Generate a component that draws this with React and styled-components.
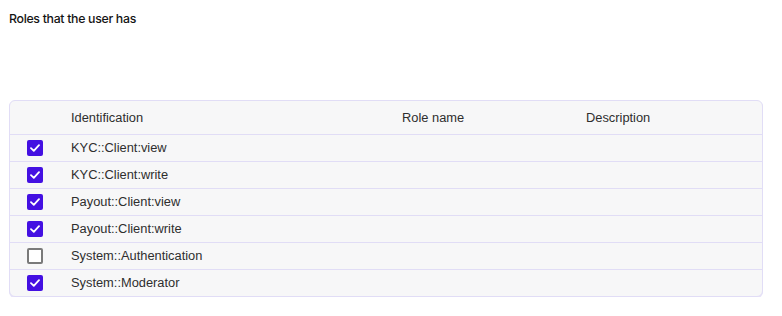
import styled, { createGlobalStyle } from 'styled-components';

const GlobalStyle = createGlobalStyle`
    body {
        margin: 0;
        background: #ffffff;
        font-family: "Liberation Sans", Arial, sans-serif;
    }
`;

const roles = [
    { id: 'KYC::Client:view', checked: true },
    { id: 'KYC::Client:write', checked: true },
    { id: 'Payout::Client:view', checked: true },
    { id: 'Payout::Client:write', checked: true },
    { id: 'System::Authentication', checked: false },
    { id: 'System::Moderator', checked: true },
];

function CheckMark() {
    return (
        <svg width="10" height="8" viewBox="0 0 10 8" fill="none">
            <path d="M1 4.2L3.8 6.8L9 1.2" stroke="#ffffff" strokeWidth="1.8" strokeLinecap="round" strokeLinejoin="round" />
        </svg>
    );
}

function App() {
    return (
        <Page>
            <GlobalStyle />
            <Title>Roles that the user has</Title>
            <Table>
                <HeaderRow>
                    <Cell />
                    <Cell>Identification</Cell>
                    <Cell>Role name</Cell>
                    <Cell>Description</Cell>
                </HeaderRow>
                {roles.map((role) => (
                    <Row key={role.id}>
                        <BoxCell>
                            <Box checked={role.checked}>
                                {role.checked && <CheckMark />}
                            </Box>
                        </BoxCell>
                        <RowCell>{role.id}</RowCell>
                        <RowCell />
                        <RowCell />
                    </Row>
                ))}
            </Table>
        </Page>
    );
}

const Page = styled.div`
    padding: 11px 19px 0 9px;
`;

const Title = styled.h2`
    margin: 0;
    font-family: Inter, "Liberation Sans", sans-serif;
    font-size: 12.3px;
    font-weight: 500;
    line-height: 16px;
    letter-spacing: -0.3px;
    color: #141414;
`;

const Table = styled.div`
    margin-top: 73px;
    border: 1px solid #e1ddf6;
    border-radius: 6px;
    background: #f7f7f8;
    overflow: hidden;
    box-shadow: 0 1px 0 #e6e2f8;
`;

const HeaderRow = styled.div`
    display: grid;
    grid-template-columns: 61px 331px 184px 1fr;
    align-items: center;
    height: 33px;
    border-bottom: 1px solid #e1ddf6;
`;

const Row = styled(HeaderRow)`
    height: 26px;

    &:last-child {
        border-bottom: none;
    }
`;

const Cell = styled.div`
    font-size: 12.85px;
    color: #2e2e2e;
    white-space: nowrap;
`;

const RowCell = styled(Cell)`
    padding-bottom: 2px;
`;

const BoxCell = styled.div`
    display: flex;
    align-items: center;
    padding-left: 17px;
`;

const Box = styled.span`
    box-sizing: border-box;
    display: flex;
    justify-content: center;
    align-items: center;
    width: 16px;
    height: 16px;
    border-radius: 2px;
    background: ${(p) => (p.checked ? '#4410e2' : '#ffffff')};
    border: ${(p) => (p.checked ? 'none' : '2px solid #7a7a7a')};
`;

export default App;
